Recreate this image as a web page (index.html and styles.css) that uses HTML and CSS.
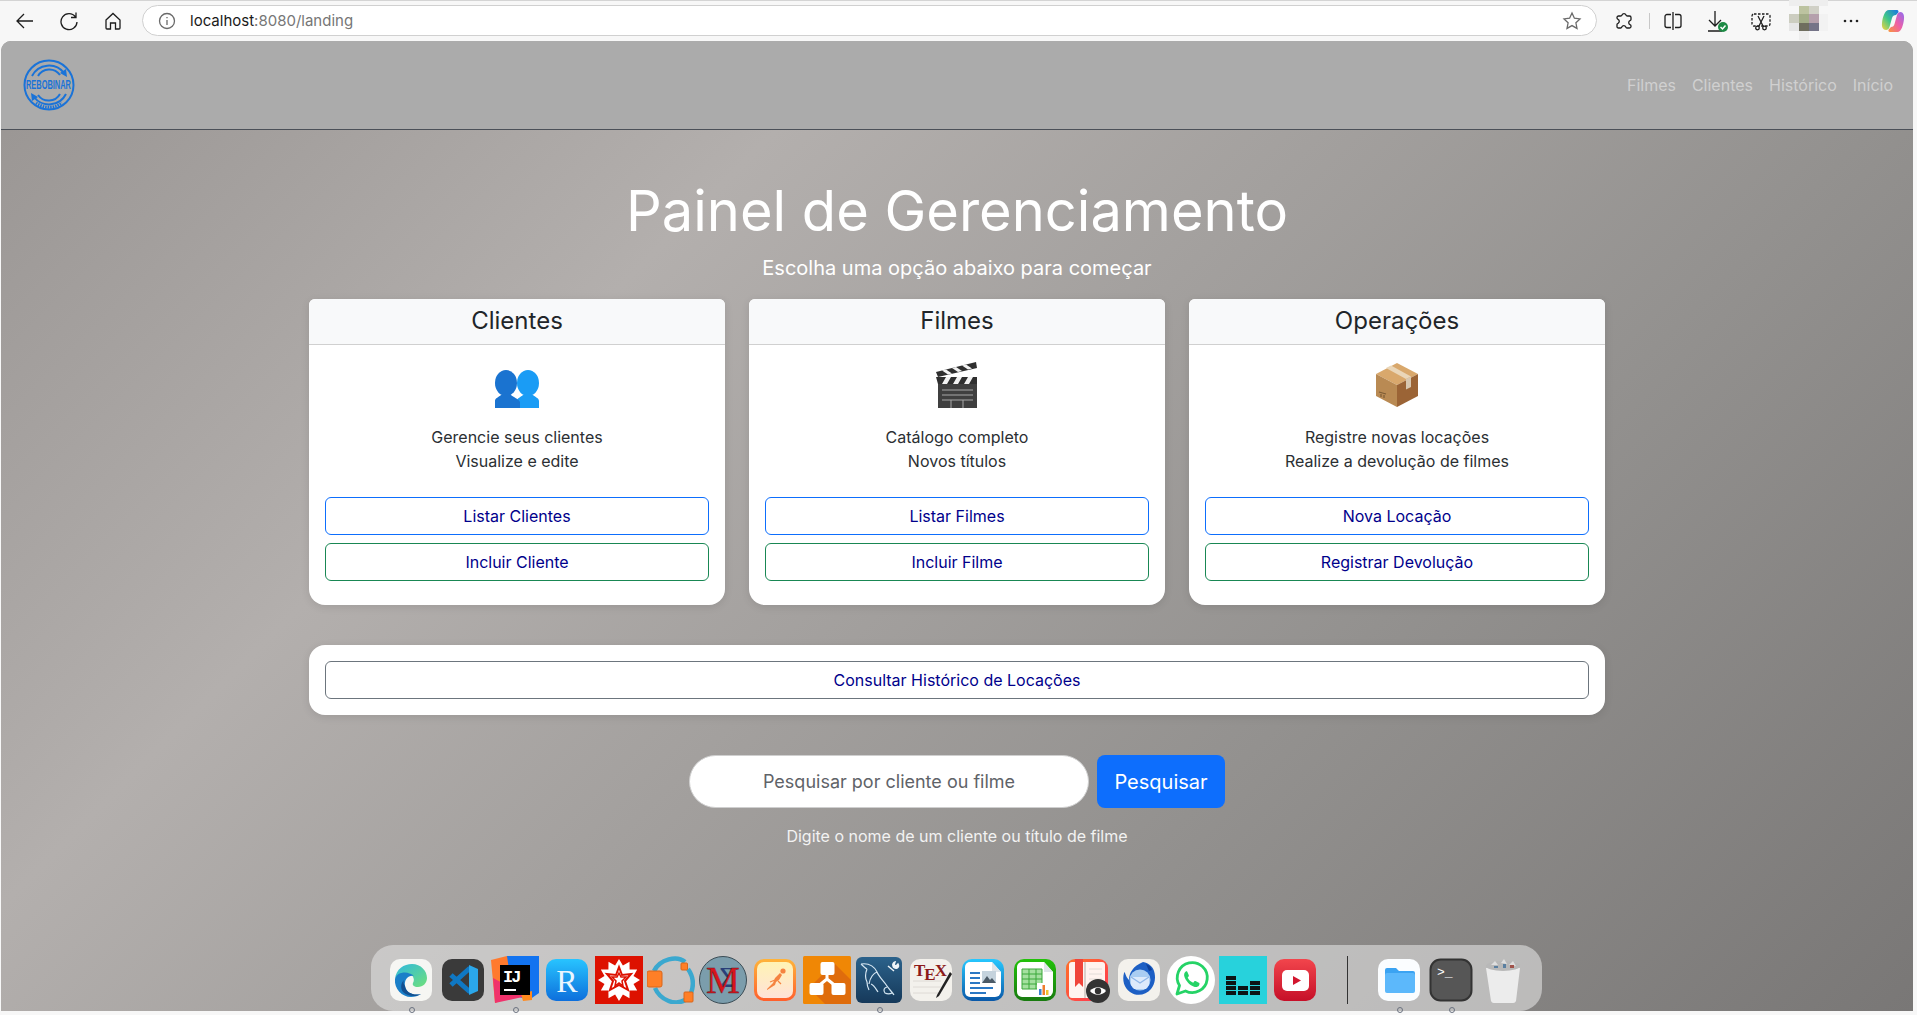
FILE: index.html
```html
<!DOCTYPE html>
<html lang="pt-BR">
<head>
<meta charset="utf-8">
<title>Painel de Gerenciamento</title>
<link rel="stylesheet" href="styles.css">
</head>
<body>
<header class="toolbar">
  <span class="tb-btn"><svg width="20" height="20" viewBox="0 0 20 20" class="ico"><path d="M18 10H2M9 3l-7 7 7 7"/></svg></span>
  <span class="tb-btn"><svg width="20" height="20" viewBox="0 0 20 20" class="ico"><path d="M16.500 6A8 8 0 1 0 18 11M17 1.500V6.500H12"/></svg></span>
  <span class="tb-btn"><svg width="20" height="20" viewBox="0 0 20 20" class="ico"><path d="M3 9l7-6.500L17 9v8a1 1 0 0 1-1 1h-3.500v-6h-5v6H4a1 1 0 0 1-1-1z"/></svg></span>
  <div class="address">
    <svg width="20" height="20" viewBox="0 0 20 20" class="ico ico-grey"><circle cx="10" cy="10" r="7.500"/><path d="M10 9v5M10 6v1.200"/></svg>
    <span class="url"><span class="url-host">localhost</span>:8080/landing</span>
    <svg width="20" height="20" viewBox="0 0 20 20" class="ico ico-grey star"><path d="M10 2l2.400 5.200 5.600.7-4.100 3.900 1.100 5.600-5-2.800-5 2.800 1.100-5.600L2 7.900l5.600-.7z"/></svg>
  </div>
  <span class="tb-btn"><svg width="20" height="20" viewBox="0 0 20 20" class="ico"><path d="M8 4a2.200 2.200 0 0 1 4 0c.2.8.8 1 1.500 1h2A1.500 1.500 0 0 1 17 6.500v2c0 .7-.4 1-1 1.200a2.200 2.200 0 0 0 0 4c.6.2 1 .5 1 1.200v.6a1.500 1.500 0 0 1-1.500 1.500H13c-.7 0-1-.4-1.200-1a2.200 2.200 0 0 0-4 0c-.2.6-.5 1-1.200 1H4.500A1.500 1.500 0 0 1 3 16v-2.500c0-.7.4-1 1-1.200a2.200 2.200 0 0 0 0-4c-.6-.2-1-.5-1-1.200V6.500A1.500 1.500 0 0 1 4.500 5h2c.7 0 1.300-.2 1.500-1z"/></svg></span>
  <span class="tb-divider"></span>
  <span class="tb-btn tb-split"><svg width="20" height="20" viewBox="0 0 20 20" class="ico"><path d="M10 1v18M8 3.500H4a2 2 0 0 0-2 2v9a2 2 0 0 0 2 2h4M12 3.500h4a2 2 0 0 1 2 2v9a2 2 0 0 1-2 2h-4"/></svg></span>
  <span class="tb-btn"><svg width="24" height="24" viewBox="0 0 24 24" class="ico"><path d="M10 2v14M4 11l6 6 6-6M3 22h14"/><circle class="ok-fill" cx="18" cy="18" r="5"/><path class="ok-check" d="M15.500 18l2 2 3-3.500"/></svg></span>
  <span class="tb-btn"><svg width="20" height="20" viewBox="0 0 20 20" class="ico"><rect class="dashed" x="1" y="3" width="18" height="12" rx="2"/><path d="M7 5l5 10M13 5L8 15"/><circle cx="6.500" cy="17" r="1.800"/><circle cx="13.500" cy="17" r="1.800"/></svg></span>
  <svg class="avatar" width="40" height="40" viewBox="0 0 40 40">
    <rect width="39" height="6" fill="#eeeeee"/>
    <rect x="10" y="6" width="10" height="8" fill="#bcc3a0"/><rect x="20" y="6" width="10" height="8" fill="#d0d0c6"/>
    <rect y="14" width="10" height="9" fill="#cccdc0"/><rect x="10" y="14" width="10" height="9" fill="#a3ad88"/><rect x="20" y="14" width="10" height="9" fill="#b5a0ac"/><rect x="30" y="14" width="9" height="9" fill="#f2f2f2"/>
    <rect y="23" width="10" height="8" fill="#e6e6e6"/><rect x="10" y="23" width="10" height="8" fill="#6f6e5f"/><rect x="20" y="23" width="10" height="8" fill="#757488"/><rect x="30" y="23" width="9" height="8" fill="#f2f2f2"/>
    <rect x="10" y="31" width="10" height="9" fill="#eeeeee"/>
  </svg>
  <span class="tb-btn"><svg width="20" height="20" viewBox="0 0 20 20"><circle cx="4" cy="10" r="1.300" fill="#222"/><circle cx="10" cy="10" r="1.300" fill="#222"/><circle cx="16" cy="10" r="1.300" fill="#222"/></svg></span>
  <span class="tb-copilot"><svg width="24" height="24" viewBox="0 0 24 24">
    <defs>
      <linearGradient id="cpA" x1="0" y1="1" x2="1" y2="0"><stop offset="0" stop-color="#f6d33c"/><stop offset=".45" stop-color="#3fc78a"/><stop offset="1" stop-color="#1673e6"/></linearGradient>
      <linearGradient id="cpB" x1="1" y1="0" x2="0" y2="1"><stop offset="0" stop-color="#8f6bf0"/><stop offset=".5" stop-color="#ee5fa7"/><stop offset="1" stop-color="#f9963b"/></linearGradient>
    </defs>
    <path d="M8 1h8c1.500 0 1.800 1.500 1.300 2.500L15 6c-2 0-3.500 1-4 3L8.500 18c-.5 2-2 3-3.500 3C2 21 .5 18 1 14 1.500 9 3.500 1 8 1z" fill="url(#cpA)"/>
    <path d="M16 23H9c-1.500 0-2-1.300-1.300-2.500L10 18c2 0 3-1 3.500-3l2.500-9c.5-2 2-3 3.500-3 2.500 0 4 3 3.500 7-.5 5-2.500 13-6.500 13z" fill="url(#cpB)"/>
  </svg></span>
</header>

<div class="page">
  <nav class="navbar">
    <svg class="logo" width="52" height="52" viewBox="0 0 52 52">
      <circle class="logo-line" cx="26" cy="26" r="24.500"/>
      <path class="logo-line" d="M9 17a19 19 0 0 1 32-3M43 35a19 19 0 0 1-32 3"/>
      <path class="logo-line" d="M15 17a13 13 0 0 1 22-1M37 35a13 13 0 0 1-22 1"/>
      <path class="logo-fill" d="M43 10l1 8-7-4zM9 42l-1-8 7 4z"/>
      <text class="logo-text" x="4.800" y="30" transform="scale(.62 1)">REBOBINAR</text>
      <path class="logo-dash" d="M13 44a22 22 0 0 0 26 0"/>
    </svg>
    <ul class="nav-links">
      <li><a class="nav-link" href="#">Filmes</a></li>
      <li><a class="nav-link" href="#">Clientes</a></li>
      <li><a class="nav-link" href="#">Histórico</a></li>
      <li><a class="nav-link" href="#">Início</a></li>
    </ul>
  </nav>

  <main class="container">
    <h1 class="title">Painel de Gerenciamento</h1>
    <p class="lead">Escolha uma opção abaixo para começar</p>

    <section class="cards">
      <article class="card">
        <h2 class="card-header">Clientes</h2>
        <div class="card-body">
          <svg class="emoji" width="48" height="48" viewBox="0 0 48 48">
            <ellipse cx="35" cy="22" rx="11" ry="13" fill="#1a9cf5"/><path d="M24 47v-7c0-3 4-4 6-6h10c2 2 6 3 6 6v7z" fill="#1a9cf5"/>
            <ellipse cx="13" cy="22" rx="11" ry="13" fill="#1a73d0"/><path d="M2 47v-7c0-3 4-4 6-6h10c2 2 8 4 9 7v6z" fill="#1a73d0"/>
          </svg>
          <p class="card-text">Gerencie seus clientes<br>Visualize e edite</p>
          <a class="btn btn-primary" href="#">Listar Clientes</a>
          <a class="btn btn-success" href="#">Incluir Cliente</a>
        </div>
      </article>
      <article class="card">
        <h2 class="card-header">Filmes</h2>
        <div class="card-body">
          <svg class="emoji" width="48" height="48" viewBox="0 0 48 48">
            <rect x="5" y="22" width="39" height="25" fill="#3f3f3f"/>
            <path d="M9 29h31M9 34h31M9 39h31M18 39v8M30 39v8" stroke="#a8a8a8" stroke-width="1"/>
            <path d="M3 16h41v7H5z" fill="#2f2f2f"/>
            <path d="M9 23l4-7h5l-4 7zM20 23l4-7h5l-4 7zM31 23l4-7h5l-4 7z" fill="#f2f2f2"/>
            <path d="M3 11L43 1l1 6L5 16z" fill="#2f2f2f"/>
            <path d="M9 9.500l6 4 4-1-6-4zM19 7l6 4 4-1-6-4zM29 4.500l6 4 4-1-6-4z" fill="#f2f2f2"/>
          </svg>
          <p class="card-text">Catálogo completo<br>Novos títulos</p>
          <a class="btn btn-primary" href="#">Listar Filmes</a>
          <a class="btn btn-success" href="#">Incluir Filme</a>
        </div>
      </article>
      <article class="card">
        <h2 class="card-header">Operações</h2>
        <div class="card-body">
          <svg class="emoji" width="48" height="48" viewBox="0 0 48 48">
            <path d="M24 2l21 11-21 11L3 13z" fill="#d9a86c"/>
            <path d="M3 13l21 11v22L3 35z" fill="#b98a53"/>
            <path d="M45 13L24 24v22l21-11z" fill="#9b6436"/>
            <path d="M13 7l20 11 5-2.500L18 4.500z" fill="#ead6b8"/>
            <path d="M33 18l5-2.500V26l-5 2.500z" fill="#d8c7b0"/>
            <path d="M6 31l7 2M8 33v3M11 34v3" stroke="#7d5c36" stroke-width="1.200" fill="none"/>
          </svg>
          <p class="card-text">Registre novas locações<br>Realize a devolução de filmes</p>
          <a class="btn btn-primary" href="#">Nova Locação</a>
          <a class="btn btn-success" href="#">Registrar Devolução</a>
        </div>
      </article>
    </section>

    <section class="wide-card">
      <a class="btn btn-secondary" href="#">Consultar Histórico de Locações</a>
    </section>

    <form class="search">
      <input class="search-input" type="text" placeholder="Pesquisar por cliente ou filme">
      <button class="search-btn" type="button">Pesquisar</button>
    </form>
    <p class="help">Digite o nome de um cliente ou título de filme</p>
  </main>
</div>

<aside class="dock">
  <span class="slot has-dot"><svg width="48" height="48" viewBox="0 0 48 48">
    <defs><linearGradient id="edgeG" x1="0" y1="0" x2="1" y2="1"><stop offset="0" stop-color="#2fb8e0"/><stop offset="1" stop-color="#6fe07a"/></linearGradient></defs>
    <rect x="3" y="3" width="42" height="42" rx="10" fill="#f6f6f3"/>
    <path d="M8 23C9 13 17 8 25 8c9 0 15 7 15 14 0 5-4 9-9 9-4 0-6-2-5-4 3-5-2-11-8-10-6 1-9 3-10 6z" fill="url(#edgeG)"/>
    <path d="M8 23c-1 10 7 18 16 18 4 0 7-1 10-3-7 2-15-1-16-8-1-6 3-11 9-10-5-5-17-5-19 3z" fill="#1a7fc8"/>
    <path d="M18 30c1 7 9 10 16 8-4 3-13 3-18-2-3-4-2-9 1-12-1 2-.5 4 1 6z" fill="#134f8f"/>
  </svg></span>
  <span class="slot"><svg width="48" height="48" viewBox="0 0 48 48">
    <rect x="3" y="3" width="42" height="42" rx="10" fill="#3a3a3a"/>
    <path d="M31 12L12 29M31 36L12 19" stroke="#0f78c4" stroke-width="5" fill="none"/>
    <path d="M30 9l9 4v22l-9 4z" fill="#2ba7ea"/>
  </svg></span>
  <span class="slot has-dot"><svg width="48" height="48" viewBox="0 0 48 48">
    <path d="M16 0h32v37l-10 7-26-8z" fill="#1273f0"/>
    <path d="M0 4l16-4 6 40-18 7z" fill="#ff7a2e"/>
    <path d="M2 22l34 18-32 7z" fill="#f0326c"/>
    <path d="M30 38l11-3v9l-9 1z" fill="#ff8a1e"/>
    <rect x="9" y="9" width="30" height="30" fill="#000"/>
    <text class="ij-text" x="12" y="26">IJ</text>
    <rect x="13" y="33" width="12" height="2" fill="#fff"/>
  </svg></span>
  <span class="slot"><svg width="48" height="48" viewBox="0 0 48 48">
    <defs><linearGradient id="rG" x1="0" y1="0" x2="0" y2="1"><stop offset="0" stop-color="#28c4ff"/><stop offset="1" stop-color="#0d6fdc"/></linearGradient></defs>
    <rect x="3" y="3" width="42" height="42" rx="10" fill="url(#rG)"/>
    <text class="r-text" x="24" y="36">R</text>
  </svg></span>
  <span class="slot"><svg width="48" height="48" viewBox="0 0 48 48">
    <rect width="48" height="48" fill="#dd1100"/>
    <polygon fill="#fff" points="45,24 38.500,27.900 42.200,34.500 34.600,34.600 34.500,42.200 27.900,38.500 24,45 20.100,38.500 13.500,42.200 13.400,34.600 5.800,34.500 9.500,27.900 3,24 9.500,20.100 5.800,13.500 13.400,13.400 13.500,5.800 20.100,9.500 24,3 27.900,9.500 34.500,5.800 34.600,13.400 42.200,13.500 38.500,20.100"/>
    <polygon fill="none" stroke="#dd1100" stroke-width="2" points="24,11 27,19 36,18 30,25 33,34 24,29 15,34 18,25 12,18 21,19"/>
    <polygon fill="none" stroke="#dd1100" stroke-width="1.500" points="24,17 26,21 31,21 27,25 28,30 24,27 20,30 21,25 17,21 22,21"/>
  </svg></span>
  <span class="slot"><svg width="48" height="48" viewBox="0 0 48 48">
    <path d="M7 15C13 3 30-1 38 6M8 32c5 12 20 18 30 12M41 13c5 7 6 16 3 24" fill="none" stroke="#3aa8cf" stroke-width="4.500"/>
    <rect x="0" y="15" width="15" height="16" rx="2" fill="#ff7f27" stroke="#d9661a"/>
    <rect x="34" y="7" width="6.500" height="7" rx="1" fill="#ff7f27" stroke="#d9661a"/>
    <rect x="37" y="36" width="9" height="10" rx="1" fill="#ff7f27" stroke="#d9661a"/>
  </svg></span>
  <span class="slot"><svg width="48" height="48" viewBox="0 0 48 48">
    <circle cx="24" cy="24" r="23.500" fill="#7b9dac" stroke="#3b4c55"/>
    <text class="maxima"><tspan class="maxima-sigma" x="29" y="31">Σ</tspan><tspan class="maxima-m" x="24" y="37">M</tspan></text>
  </svg></span>
  <span class="slot"><svg width="48" height="48" viewBox="0 0 48 48">
    <defs>
      <linearGradient id="pmA" x1="0" y1="0" x2="0" y2="1"><stop offset="0" stop-color="#ffb43a"/><stop offset="1" stop-color="#ff5f2c"/></linearGradient>
      <linearGradient id="pmB" x1="0" y1="0" x2="0" y2="1"><stop offset="0" stop-color="#fff3b4"/><stop offset="1" stop-color="#ffe2d8"/></linearGradient>
    </defs>
    <rect x="3" y="3" width="42" height="42" rx="10" fill="url(#pmA)"/>
    <rect x="6" y="6" width="36" height="36" rx="7" fill="url(#pmB)"/>
    <path d="M16 33l6-6 2-5 5-5 2 2-3 5-3 2-1 3-8 5z" fill="#f58340"/>
    <path d="M24 24l-5 2M27 25l3 3" stroke="#f58340" stroke-width="1.200"/>
    <circle cx="32" cy="15" r="2.600" fill="#f58340"/>
  </svg></span>
  <span class="slot"><svg width="48" height="48" viewBox="0 0 48 48">
    <rect width="48" height="48" rx="1.500" fill="#f08705"/>
    <path d="M31 7L48 24v24H22L6 32z" fill="#df6c0c"/>
    <path d="M24 13v10L13 32M24 23l11 9" fill="none" stroke="#fff" stroke-width="3"/>
    <rect x="17.500" y="6" width="14" height="13" rx="2" fill="#fff"/>
    <rect x="6.500" y="27" width="14" height="12" rx="2" fill="#fff"/>
    <rect x="28.500" y="27" width="14" height="12" rx="2" fill="#fff"/>
  </svg></span>
  <span class="slot has-dot"><svg width="48" height="48" viewBox="0 0 48 48">
    <defs><linearGradient id="wbG" x1="0" y1="0" x2="0" y2="1"><stop offset="0" stop-color="#2b628b"/><stop offset="1" stop-color="#16395a"/></linearGradient></defs>
    <rect x="1" y="1" width="46" height="46" rx="6" fill="url(#wbG)"/>
    <path d="M6 8c7-1 13 2 16 8 2 5 6 8 10 14 2 3 5 6 7 9M6 8c2 2 4 4 6 5M12 13c-2 5-2 9 0 13 0 3 1 6 2 8M22 16c-3 1-7 5-8 12M16 28c3 1 5 5 7 8M32 31c-3 1-4 3-2 6 2 1 5 1 7 0" fill="none" stroke="#d5e6f2" stroke-width="1.200"/>
    <path d="M33 10l6 5M42 12a3 3 0 0 1-4-2 3 3 0 0 1 2-4l-1 3 2 1 2-2a3 3 0 0 1-1 4z" fill="#eef4f8" stroke="#eef4f8" stroke-width="1.500"/>
  </svg></span>
  <span class="slot"><svg width="48" height="48" viewBox="0 0 48 48">
    <rect x="3" y="3" width="42" height="42" rx="10" fill="#f3f1ec"/>
    <path d="M6 25h28M6 31h28M6 37h28" stroke="#d8d6d0" stroke-width=".800"/>
    <text class="tex-text" x="7" y="20">T<tspan dy="4" dx="-1">E</tspan><tspan dy="-4" dx="-1">X</tspan></text>
    <path d="M43 16L30 39l-1 3 3-2 13-22z" fill="#222"/>
  </svg></span>
  <span class="slot"><svg width="48" height="48" viewBox="0 0 48 48">
    <defs><linearGradient id="wrG" x1="0" y1="0" x2="0" y2="1"><stop offset="0" stop-color="#27c8ff"/><stop offset="1" stop-color="#0a58a8"/></linearGradient></defs>
    <rect x="3" y="3" width="42" height="42" rx="10" fill="url(#wrG)"/>
    <path d="M11 6h22l9 10v19a6 6 0 0 1-6 6H11a5 5 0 0 1-5-5V11a5 5 0 0 1 5-5z" fill="#fff"/>
    <path d="M33 6v10h9z" fill="#dfe5ea"/>
    <path d="M11 16h10v2H11zM11 21h10v2H11zM11 26h10v2H11zM11 31h23v2H11zM11 36h16v2H11z" fill="#2b78c4"/>
    <rect x="23" y="15" width="14" height="12" fill="#c5d3dd"/>
    <path d="M23 27l5-7 3 4 2-2 4 5z" fill="#4c5a66"/>
  </svg></span>
  <span class="slot"><svg width="48" height="48" viewBox="0 0 48 48">
    <defs><linearGradient id="caG" x1="0" y1="0" x2="0" y2="1"><stop offset="0" stop-color="#22c20a"/><stop offset="1" stop-color="#187a10"/></linearGradient></defs>
    <rect x="3" y="3" width="42" height="42" rx="10" fill="url(#caG)"/>
    <path d="M11 6h22l9 10v19a6 6 0 0 1-6 6H11a5 5 0 0 1-5-5V11a5 5 0 0 1 5-5z" fill="#fff"/>
    <path d="M33 6v10h9z" fill="#dfe5ea"/>
    <rect x="11" y="13" width="20" height="20" fill="#a5e0a0"/>
    <path d="M11 13h20v20H11zM11 18h20M11 23h20M11 28h20M18 13v20M25 13v20" fill="none" stroke="#3aa83a" stroke-width="1"/>
    <rect x="26" y="27" width="13" height="13" fill="#fff"/>
    <rect x="28" y="33" width="2.500" height="6" fill="#3b82d0"/><rect x="31.500" y="29" width="2.500" height="10" fill="#ef7d2e"/><rect x="35" y="34" width="2.500" height="5" fill="#f2c230"/>
  </svg></span>
  <span class="slot"><svg width="48" height="48" viewBox="0 0 48 48">
    <defs><linearGradient id="boG" x1="0" y1="0" x2="1" y2="1"><stop offset="0" stop-color="#ff7028"/><stop offset="1" stop-color="#ff3456"/></linearGradient></defs>
    <rect x="3" y="3" width="42" height="42" rx="9" fill="url(#boG)"/>
    <rect x="6" y="6" width="36" height="36" rx="3" fill="#fff3ef"/>
    <rect x="21" y="6" width="2" height="36" fill="#d9d0cb"/>
    <path d="M26 13h13M26 18h13M26 23h13" stroke="#e2dcd8" stroke-width="1"/>
    <path d="M12 3h8v28l-4-4-4 4z" fill="#f0443a"/>
    <circle cx="35" cy="35" r="12" fill="#333"/>
    <path d="M27 35c4-5 12-5 16 0-4 5-12 5-16 0z" fill="#fff"/>
    <circle cx="35" cy="35" r="3.200" fill="#333"/>
  </svg></span>
  <span class="slot"><svg width="48" height="48" viewBox="0 0 48 48">
    <rect x="3" y="3" width="42" height="42" rx="10" fill="#f3f1ec"/>
    <path d="M28 6c6 1 10 5 11 9 2 6 1 13-3 18-5 6-14 8-21 3C9 32 7 24 9 17c0-1 1-1 1 0 1 3 2 5 4 7 0-7 4-14 14-18z" fill="#1d5fc4"/>
    <path d="M31 8c3 1 5 3 6 6l-3 1z" fill="#0c3f99"/>
    <circle cx="25" cy="24" r="10.500" fill="#a9cdf2"/>
    <path d="M16 21h18v8l-3 4H19l-3-4z" fill="#dceafb"/>
    <path d="M16 21l9 6 9-6" fill="none" stroke="#8fb7e8" stroke-width="1.300"/>
  </svg></span>
  <span class="slot"><svg width="48" height="48" viewBox="0 0 48 48">
    <circle cx="24" cy="24" r="24" fill="#fff"/>
    <path d="M10 38l2.500-8.500A15 15 0 1 1 18.500 35z" fill="#fff" stroke="#25d366" stroke-width="2.800" stroke-linejoin="round"/>
    <path d="M19 15.500c-1.500.5-2.500 3-1.500 5.500 1.500 4 5 8 9 9.500 2.500 1 4.500.5 5.500-1 .6-1 .6-2 .3-2.500l-3.800-2c-.6-.2-1-.1-1.300.4l-1 1.400c-2.500-.8-4.500-3-5.500-5.200l.9-1.200c.3-.4.4-.8.200-1.200l-1.500-3.500c-.4-.5-1.400-.5-1.800-.2z" fill="#25d366"/>
  </svg></span>
  <span class="slot"><svg width="48" height="48" viewBox="0 0 48 48">
    <rect width="48" height="48" fill="#27d2dc"/>
    <path d="M7 20h10v4H7zM7 25h10v4H7zM7 30h10v4H7zM7 35h10v4H7zM19 30h10v4H19zM19 35h10v4H19zM31 25h10v4H31zM31 30h10v4H31zM31 35h10v4H31z" fill="#0c1416"/>
  </svg></span>
  <span class="slot"><svg width="48" height="48" viewBox="0 0 48 48">
    <defs><linearGradient id="ytG" x1="0" y1="0" x2="0" y2="1"><stop offset="0" stop-color="#f2454c"/><stop offset="1" stop-color="#c60f28"/></linearGradient></defs>
    <rect x="3" y="3" width="42" height="42" rx="10" fill="url(#ytG)"/>
    <rect x="11" y="14" width="27" height="21" rx="5" fill="#fff"/>
    <path d="M22 20l8 4.500-8 4.500z" fill="#d2162e"/>
  </svg></span>
  <span class="slot"><span class="dock-sep"></span></span>
  <span class="slot has-dot"><svg width="48" height="48" viewBox="0 0 48 48">
    <rect x="3" y="3" width="42" height="42" rx="10" fill="#fbfdff"/>
    <path d="M10 14a2 2 0 0 1 2-2h9l3 3h14a2 2 0 0 1 2 2v3H10z" fill="#3ba3f2"/>
    <rect x="10" y="17" width="30" height="20" rx="2" fill="#5cb8fb"/>
  </svg></span>
  <span class="slot has-dot"><svg width="48" height="48" viewBox="0 0 48 48">
    <rect x="3.500" y="3.500" width="41" height="41" rx="10" fill="#565656" stroke="#333" stroke-width="2"/>
    <text class="term-text" x="10" y="20">&gt;_</text>
  </svg></span>
  <span class="slot"><svg width="48" height="48" viewBox="0 0 48 48">
    <path d="M7 12h34l-4 33a3 3 0 0 1-3 2H15a3 3 0 0 1-3-2z" fill="#ececec"/>
    <ellipse cx="24" cy="10" rx="17" ry="5" fill="#b8b8b8"/>
    <path d="M12 9l4-4 3 4zM22 7l3-4 3 5zM30 9l4-4 3 5z" fill="#dedede"/>
    <path d="M15 10h4v2h-4zM24 8h3v4h-3z" fill="#5a7fa0"/><path d="M31 9h4v3h-4z" fill="#a0524a"/>
  </svg></span>
</aside>
</body>
</html>
```
FILE: styles.css
```css
* { box-sizing: border-box; }

html, body { height: 100%; margin: 0; }

body {
  display: flex;
  flex-direction: column;
  overflow: hidden;
  background: #f7f7f7;
  font-family: Inter, "Liberation Sans", sans-serif;
  font-size: 16px;
  color: #212529;
}

/* Browser toolbar */
.toolbar {
  display: flex;
  align-items: center;
  flex: 0 0 41px;
  padding-left: 3px;
  box-shadow: inset 0 1px 0 #d4d4d4;
}

.tb-btn {
  display: flex;
  align-items: center;
  justify-content: center;
  flex: 0 0 44px;
  height: 40px;
}

.tb-split { margin-left: 1px; }
.tb-divider { flex: 0 0 1px; height: 16px; margin-left: 3px; background: #c8c8c8; }

.ico { fill: none; stroke: #1d1d1d; stroke-width: 1.300; }
.ico-grey { stroke: #6a6a6a; }
.ok-fill { fill: #1d8a45; stroke: none; }
.ok-check { stroke: #fff; stroke-width: 1.500; }
.dashed { stroke-dasharray: 2.500 1.500; }

.address {
  display: flex;
  align-items: center;
  flex: 1;
  height: 31px;
  margin: 0 5px 0 7px;
  padding: 0 14px;
  background: #fff;
  border: 1px solid #d0d0d0;
  border-radius: 16px;
}

.url { margin-left: 13px; font-size: 15px; color: #767676; }
.url-host { color: #1a1a1a; }
.star { margin-left: auto; }

.avatar { flex: 0 0 40px; align-self: flex-start; margin-left: 6px; }
.tb-copilot { display: flex; flex: 0 0 44px; padding-left: 8px; }

/* Page */
.page {
  flex: 1;
  margin: 0 4px 4px 1px;
  border-radius: 10px 10px 0 0;
  background: linear-gradient(135deg, #989492 0%, #b3afad 30%, #93918f 68%, #797776 100%);
  overflow: hidden;
}

.navbar {
  display: flex;
  align-items: center;
  justify-content: space-between;
  height: 89px;
  padding: 0 12px 0 22px;
  background: #ababab;
  border-bottom: 1px solid #4b5058;
}

.logo { display: block; }
.logo-line { fill: none; stroke: #1a73d8; stroke-width: 2; }
.logo-fill { fill: #1a73d8; }
.logo-dash { fill: none; stroke: #1a73d8; stroke-width: 3; stroke-dasharray: 1.500 1; }
.logo-text {
  font-family: "Liberation Sans", sans-serif;
  font-weight: 700;
  font-size: 12px;
  fill: #1a73d8;
}

.nav-links { display: flex; margin: 0; padding: 0; list-style: none; }
.nav-link {
  display: block;
  padding: 8px;
  color: #d0d0d0;
  text-decoration: none;
  line-height: 24px;
}

.container { width: 1296px; margin: 0 auto; padding-top: 48px; }

.title {
  margin: 0 0 8px;
  font-size: 56px;
  font-weight: 400;
  line-height: 67px;
  color: #fff;
  text-align: center;
}

.lead {
  margin: 0 0 16px;
  font-size: 20px;
  font-weight: 400;
  line-height: 30px;
  color: #fff;
  text-align: center;
}

.cards { display: grid; grid-template-columns: repeat(3, 1fr); gap: 24px; margin-bottom: 40px; }

.card {
  background: #fff;
  border-radius: 6px 6px 16px 16px;
  box-shadow: 0 2px 8px rgba(0, 0, 0, .1);
  overflow: hidden;
}

.card-header {
  margin: 0;
  height: 46px;
  padding-top: 7px;
  background: #f8f9fa;
  border-bottom: 1px solid #d0d0d0;
  font-size: 24px;
  font-weight: 400;
  line-height: 29px;
  text-align: center;
}

.card-body {
  display: flex;
  flex-direction: column;
  align-items: stretch;
  gap: 8px;
  padding: 16px 16px 24px;
}

.emoji { align-self: center; margin-bottom: 8px; }
.card-text { margin: 0 0 16px; line-height: 24px; color: #2b2f33; text-align: center; }

.btn {
  display: block;
  height: 38px;
  background: #fff;
  border: 1px solid;
  border-radius: 6px;
  color: #00008b;
  line-height: 36px;
  text-align: center;
  text-decoration: none;
}

.btn-primary { border-color: #0d6efd; }
.btn-success { border-color: #198754; }
.btn-secondary { border-color: #6c757d; }

.wide-card {
  margin-bottom: 40px;
  padding: 16px;
  background: #fff;
  border-radius: 16px;
  box-shadow: 0 2px 8px rgba(0, 0, 0, .1);
}

.search { display: flex; justify-content: center; gap: 8px; }

.search-input {
  width: 400px;
  height: 53px;
  padding: 0 16px;
  background: #fff;
  border: 1px solid #cfcfcf;
  border-radius: 27px;
  font: 18px Inter, "Liberation Sans", sans-serif;
  text-align: center;
}

.search-input::placeholder { color: #5f6368; opacity: 1; }

.search-btn {
  width: 128px;
  height: 53px;
  background: #0d6efd;
  border: 0;
  border-radius: 8px;
  color: #fff;
  font: 20px Inter, "Liberation Sans", sans-serif;
}

.help { margin: 16px 0 0; line-height: 24px; color: #f2f2f2; text-align: center; }

/* Dock */
.dock {
  position: absolute;
  left: 371px;
  bottom: 4px;
  display: flex;
  align-items: flex-start;
  width: 1171px;
  height: 66px;
  padding: 11px 0 0 14px;
  background: rgba(225, 225, 225, .6);
  border-radius: 22px;
}

.slot {
  position: relative;
  display: flex;
  justify-content: center;
  flex: 0 0 52px;
  height: 48px;
}

.has-dot::after {
  content: "";
  position: absolute;
  left: 24px;
  top: 51px;
  width: 4px;
  height: 4px;
  border: 1px solid #6b7280;
  border-radius: 50%;
}

.dock-sep { width: 1px; height: 48px; background: #333; }

.ij-text { font: 700 17px "Liberation Mono", monospace; fill: #fff; letter-spacing: -2px; }
.r-text { font: 32px "Liberation Serif", serif; fill: #eaf6ff; text-anchor: middle; }
.maxima { font-family: "Liberation Serif", serif; text-anchor: middle; }
.maxima-sigma { font-size: 30px; fill: #2a3f78; }
.maxima-m { font-size: 38px; fill: #d8141c; stroke: #5a1a20; stroke-width: .4; }
.tex-text { font: 700 17px "Liberation Serif", serif; fill: #8c1a1a; }
.term-text { font: 13px "Liberation Mono", monospace; fill: #fff; }
```
